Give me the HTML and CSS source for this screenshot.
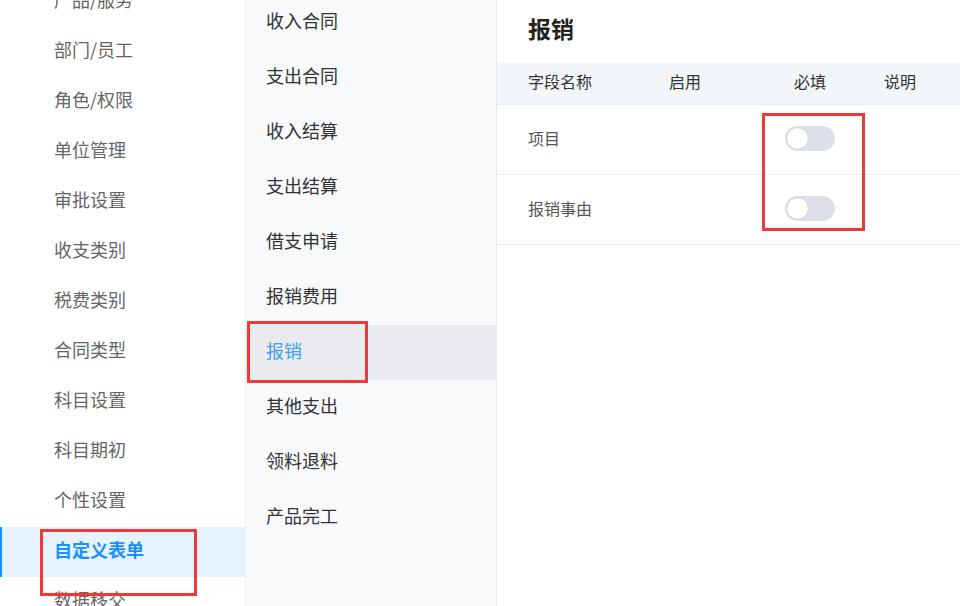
FILE: index.html
```html
<!DOCTYPE html>
<html>
<head>
    <title>自定义表单</title>
    <link rel="stylesheet" href="styles.css">
</head>
<body>
    <div class="page">
        <ul class="side-menu">
            <li>产品/服务</li>
            <li>部门/员工</li>
            <li>角色/权限</li>
            <li>单位管理</li>
            <li>审批设置</li>
            <li>收支类别</li>
            <li>税费类别</li>
            <li>合同类型</li>
            <li>科目设置</li>
            <li>科目期初</li>
            <li>个性设置</li>
            <li class="active">自定义表单</li>
            <li>数据移交</li>
        </ul>

        <ul class="form-list">
            <li>收入合同</li>
            <li>支出合同</li>
            <li>收入结算</li>
            <li>支出结算</li>
            <li>借支申请</li>
            <li>报销费用</li>
            <li class="active">报销</li>
            <li>其他支出</li>
            <li>领料退料</li>
            <li>产品完工</li>
        </ul>

        <div class="content">
            <h2 class="title">报销</h2>
            <div class="table">
                <div class="row head">
                    <span>字段名称</span>
                    <span>启用</span>
                    <span class="center">必填</span>
                    <span class="note">说明</span>
                </div>
                <div class="row">
                    <span>项目</span>
                    <span></span>
                    <span class="center"><i class="switch"></i></span>
                    <span class="note"></span>
                </div>
                <div class="row">
                    <span>报销事由</span>
                    <span></span>
                    <span class="center"><i class="switch"></i></span>
                    <span class="note"></span>
                </div>
            </div>
        </div>

        <!-- 标注框 -->
        <div class="mark mark-menu"></div>
        <div class="mark mark-form"></div>
        <div class="mark mark-switch"></div>
    </div>
</body>
</html>
```

FILE: styles.css
```css
*{padding: 0;margin: 0;box-sizing: border-box;}
ul{list-style: none;}
body{
    font-family: "Microsoft YaHei", "Noto Sans CJK SC", sans-serif;
    background: #fff;
}
.page{
    position: relative;
    display: flex;
    width: 960px;
    height: 606px;
    overflow: hidden;
}

/* 左侧菜单 */
.side-menu{
    width: 246px;
    flex-shrink: 0;
    border-right: 1px solid #eceef2;
    margin-top: -23px;
}
.side-menu li{
    height: 50px;
    line-height: 45px;
    padding-left: 54px;
    font-size: 18px;
    color: #666;
    border-left: 2px solid transparent;
    text-indent: -2px;
}
.side-menu li.active{
    background: #e6f3fe;
    border-left-color: #1890ff;
    color: #1890ff;
    font-weight: bold;
}

/* 表单列表 */
.form-list{
    width: 251px;
    flex-shrink: 0;
    background: #f8f9fb;
    border-right: 1px solid #e6e9ee;
    margin-top: -5px;
}
.form-list li{
    height: 55px;
    line-height: 50px;
    padding-left: 20px;
    font-size: 18px;
    color: #333;
}
.form-list li.active{
    background: #e9ebee;
    color: #3d9ff5;
}

/* 右侧内容 */
.content{
    flex: 1;
}
.title{
    height: 63px;
    line-height: 57px;
    padding-left: 31px;
    font-size: 23px;
    font-weight: bold;
    color: #222;
}
.row{
    display: grid;
    grid-template-columns: 141px 96px 90px 1fr;
    align-items: center;
    height: 70px;
    padding-left: 31px;
    padding-bottom: 4px;
    font-size: 16px;
    color: #555;
    border-bottom: 1px solid #eaedf1;
}
.row.head{
    height: 42px;
    padding-bottom: 5px;
    background: #f3f6f9;
    color: #333;
}
.row .center{
    text-align: center;
}
.row .note{
    padding-left: 29px;
}
.switch{
    display: inline-block;
    position: relative;
    width: 50px;
    height: 25px;
    border-radius: 13px;
    background: #dcdfe6;
    vertical-align: middle;
}
.switch:after{
    content: '';
    position: absolute;
    left: 2px;
    top: 2px;
    width: 21px;
    height: 21px;
    border-radius: 50%;
    background: #fff;
    box-shadow: 0 0 1px rgba(0,0,0,.25);
}

/* 红色标注 */
.mark{
    position: absolute;
    border: 3px solid #ef3838;
}
.mark-menu{
    left: 40px;
    top: 529px;
    width: 157px;
    height: 67px;
}
.mark-form{
    left: 247px;
    top: 321px;
    width: 121px;
    height: 62px;
}
.mark-switch{
    left: 762px;
    top: 113px;
    width: 103px;
    height: 118px;
}
```
